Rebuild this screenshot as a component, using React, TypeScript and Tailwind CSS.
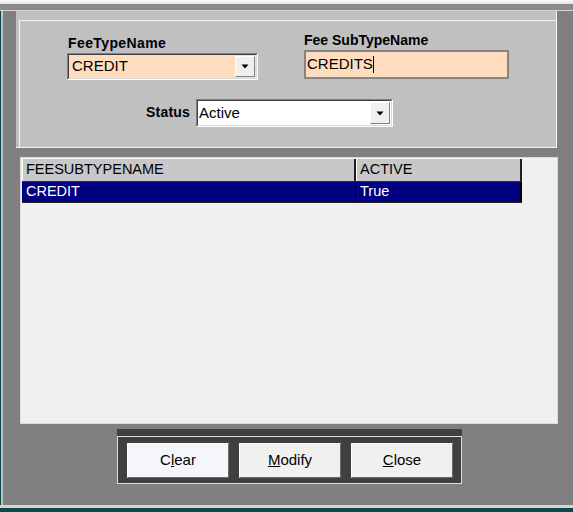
import React from "react";

function Arrow() {
  return (
    <svg width="8" height="5" viewBox="0 0 8 5" className="block">
      <polygon points="0.5,0.5 7.5,0.5 4,4.5" fill="#000" />
    </svg>
  );
}

function DropBtn() {
  return (
    <div className="absolute right-[1px] top-[1px] bottom-[1px] w-[20px] bg-[#f0f0f0] border border-t-white border-l-white border-b-[#808080] border-r-[#808080] flex items-center justify-center">
      <Arrow />
    </div>
  );
}

export default function App() {
  return (
    <div className="w-[573px] h-[512px] overflow-hidden bg-[#808080] flex flex-col font-['Liberation_Sans',Arial,sans-serif] text-black">
      {/* top strip */}
      <div className="h-[4px] bg-gradient-to-b from-[#fafafa] to-[#e4e4e4]" />
      <div className="h-[6px] bg-[#8a8a8a]" />
      <div className="h-[1px] bg-[#d4d4d4]" />

      <div className="flex-1 flex min-h-0">
        <div className="w-[1px] bg-[#0b4a4a]" />
        <div className="w-[2px] bg-[#c4c4c4]" />
        <div className="flex-1 flex flex-col pl-[13px]">
          {/* top group */}
          <div className="w-[541px] h-[137px] bg-[#c0c0c0] pl-[3px] pt-[9px] border-r border-b border-r-[#f4f4f4] border-b-[#f4f4f4] flex">
            <div className="flex-1 border-l border-t border-l-[#f4f4f4] border-t-[#f4f4f4] flex flex-col">
              <div className="flex items-start">
                {/* FeeTypeName */}
                <div className="ml-[47px] mt-[14px] flex flex-col">
                  <div className="h-[16px] leading-[16px] text-[14px] font-bold tracking-[0.4px] ml-[1px]">FeeTypeName</div>
                  <div className="mt-[2px] w-[191px] h-[27px] border border-t-[#808080] border-l-[#808080] border-b-white border-r-white">
                    <div className="relative w-full h-full bg-[#ffdcbe] border border-t-[#404040] border-l-[#404040] border-b-[#d8d8d8] border-r-[#d8d8d8] flex items-center pl-[3px] text-[15px]">
                      CREDIT
                      <DropBtn />
                    </div>
                  </div>
                </div>
                {/* FeeSubTypeName */}
                <div className="ml-[46px] mt-[11px] flex flex-col">
                  <div className="h-[16px] leading-[16px] text-[14px] font-bold">Fee SubTypeName</div>
                  <div className="mt-[2px] w-[205px] h-[29px] bg-[#ffdcbe] border-2 border-[#858585] flex items-center pl-[1px] text-[15px]">
                    CREDITS
                    <span className="inline-block w-[1px] h-[17px] bg-black" />
                  </div>
                </div>
              </div>
              {/* Status */}
              <div className="flex items-start mt-[19px]">
                <div className="ml-[126px] mt-[5px] h-[16px] leading-[16px] text-[14px] font-bold tracking-[0.2px]">Status</div>
                <div className="ml-[6px] w-[197px] h-[28px] border border-t-[#808080] border-l-[#808080] border-b-white border-r-white">
                  <div className="relative w-full h-full bg-white border border-t-[#404040] border-l-[#404040] border-b-[#d8d8d8] border-r-[#d8d8d8] flex items-center pl-[1px] text-[15px]">
                    Active
                    <DropBtn />
                  </div>
                </div>
              </div>
            </div>
          </div>

          {/* list */}
          <div className="mt-[9px] ml-[4px] w-[538px] h-[267px] bg-[#f0f0f0] border border-[#dcdcdc] p-[1px]">
            <div className="w-[500px] text-[14.5px]">
              <div className="flex h-[23px] bg-[#c8c8c8] border-b border-b-[#303030]">
                <div className="w-[334px] border-l border-l-white border-r-2 border-r-[#202020] pl-[3px] flex items-center">FEESUBTYPENAME</div>
                <div className="flex-1 border-l border-l-white border-r-2 border-r-[#202020] pl-[3px] flex items-center">ACTIVE</div>
              </div>
              <div className="flex h-[21px] bg-[#000080] text-white border-b border-b-[#202020]">
                <div className="w-[334px] border-r border-r-black pl-[4px] flex items-center">CREDIT</div>
                <div className="flex-1 border-r-2 border-r-black pl-[4px] flex items-center">True</div>
              </div>
            </div>
          </div>

          {/* buttons */}
          <div className="mt-[5px] ml-[101px] w-[345px] flex flex-col">
            <div className="h-[7px] bg-[#404040]" />
            <div className="h-[48px] bg-[#404040] border border-[#dcdcdc] flex items-start pl-[9px] pt-[6px] gap-[10px]">
              <div className="w-[102px] h-[35px] bg-[#f4f6fa] border border-t-white border-l-white border-b-[#6a6a6a] border-r-[#6a6a6a] flex items-center justify-center text-[15px]">
                C<span className="underline">l</span>ear
              </div>
              <div className="w-[102px] h-[35px] bg-[#f0f0f0] border border-t-white border-l-white border-b-[#6a6a6a] border-r-[#6a6a6a] flex items-center justify-center text-[15px]">
                <span className="underline">M</span>odify
              </div>
              <div className="w-[102px] h-[35px] bg-[#f0f0f0] border border-t-white border-l-white border-b-[#6a6a6a] border-r-[#6a6a6a] flex items-center justify-center text-[15px]">
                <span className="underline">C</span>lose
              </div>
            </div>
          </div>
        </div>
      </div>

      {/* bottom */}
      <div className="h-[3px] bg-[#d4d4d4]" />
      <div className="h-[4px] bg-[#0b4a4a]" />
    </div>
  );
}
